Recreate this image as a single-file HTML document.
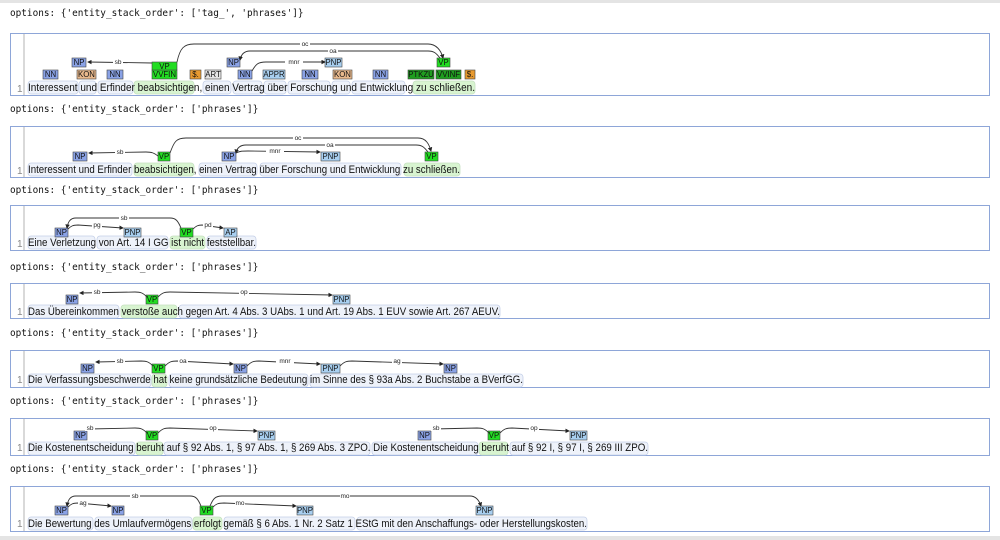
<!DOCTYPE html>
<html><head><meta charset="utf-8"><style>
html,body{margin:0;padding:0;background:#fff;width:1000px;height:540px;overflow:hidden}
svg{display:block}
.h{font-family:"DejaVu Sans Mono","Liberation Mono",monospace;font-size:9.4px;fill:#111}
.t{font-family:"Liberation Sans",Arial,sans-serif;font-size:11px;fill:#111}
.l{font-family:"Liberation Sans",Arial,sans-serif;font-size:7.8px;fill:#111;text-anchor:middle}
.a{font-family:"Liberation Sans",Arial,sans-serif;font-size:6.5px;fill:#222;text-anchor:middle}
.arc{fill:none;stroke:#333;stroke-width:0.9}
.pan{fill:#fff;stroke:#8ea6d8;stroke-width:1}
.wb{fill:#eef2fa;stroke:#c5d0e8;stroke-width:0.8}
.wg{fill:#d8f4d0;stroke:#c5e0c0;stroke-width:0.8}
.n{font-family:"Liberation Sans",Arial,sans-serif;font-size:10px;fill:#888}
</style></head><body>
<svg width="1000" height="540" viewBox="0 0 1000 540">
<defs><marker id="m" markerWidth="5" markerHeight="5" refX="4" refY="2.5" orient="auto"><path d="M0,0 L5,2.5 L0,5z" fill="#222"/></marker></defs>
<rect x="0" y="0" width="1000" height="3" fill="#e4e4e4"/>
<rect x="0" y="536" width="1000" height="4" fill="#e4e4e4"/>

<text class="h" x="10" y="16">options: {'entity_stack_order': ['tag_', 'phrases']}</text>
<text class="h" x="10" y="112">options: {'entity_stack_order': ['phrases']}</text>
<text class="h" x="10" y="193">options: {'entity_stack_order': ['phrases']}</text>
<text class="h" x="10" y="270">options: {'entity_stack_order': ['phrases']}</text>
<text class="h" x="10" y="336">options: {'entity_stack_order': ['phrases']}</text>
<text class="h" x="10" y="404">options: {'entity_stack_order': ['phrases']}</text>
<text class="h" x="10" y="472">options: {'entity_stack_order': ['phrases']}</text>

<g>
<rect class="pan" x="10.5" y="33.5" width="979" height="62"/>
<rect class="pan" x="10.5" y="126.5" width="979" height="51"/>
<rect class="pan" x="10.5" y="205.5" width="979" height="45"/>
<rect class="pan" x="10.5" y="283.5" width="979" height="35"/>
<rect class="pan" x="10.5" y="350.5" width="979" height="37"/>
<rect class="pan" x="10.5" y="418.5" width="979" height="37"/>
<rect class="pan" x="10.5" y="486.5" width="979" height="45"/>
</g>
<g stroke="#ccc" stroke-width="1.5">
<line x1="24" y1="34" x2="24" y2="95"/><line x1="24" y1="127" x2="24" y2="177"/>
<line x1="24" y1="206" x2="24" y2="250"/><line x1="24" y1="284" x2="24" y2="318"/>
<line x1="24" y1="351" x2="24" y2="387"/><line x1="24" y1="419" x2="24" y2="455"/>
<line x1="24" y1="487" x2="24" y2="531"/>
</g>
<text x="17" y="92" class="n">1</text><text x="17" y="174" class="n">1</text><text x="17" y="247" class="n">1</text><text x="17" y="315" class="n">1</text><text x="17" y="383" class="n">1</text><text x="17" y="451" class="n">1</text><text x="17" y="527" class="n">1</text>

<!-- PANEL 1 -->
<g>
<rect class="wb" x="28" y="81" width="50" height="13" rx="3"/><rect class="wb" x="79" y="81" width="17" height="13" rx="3"/><rect class="wb" x="98" y="81" width="35" height="13" rx="3"/>
<rect class="wg" x="134" y="81" width="60" height="13" rx="3"/><rect class="wb" x="203" y="81" width="28" height="13" rx="3"/><rect class="wb" x="233" y="81" width="29" height="13" rx="3"/>
<rect class="wb" x="264" y="81" width="22" height="13" rx="3"/><rect class="wb" x="288" y="81" width="42" height="13" rx="3"/><rect class="wb" x="332" y="81" width="18" height="13" rx="3"/><rect class="wb" x="352" y="81" width="53" height="13" rx="3"/>
<rect class="wg" x="413" y="81" width="62" height="13" rx="3"/>
<text class="t" x="28" y="91" textLength="447" lengthAdjust="spacingAndGlyphs">Interessent und Erfinder beabsichtigen,  einen Vertrag über Forschung und Entwicklung   zu schließen.</text>
<g stroke="#444" stroke-width="0.6">
<rect x="43" y="70" width="15" height="9" fill="#8aa2e6"/><rect x="77" y="70" width="19" height="9" fill="#e8b88c"/><rect x="107" y="70" width="16" height="9" fill="#8aa2e6"/>
<rect x="152" y="70" width="25" height="9" fill="#22dd22"/><rect x="190" y="70" width="11" height="9" fill="#e89a30"/><rect x="205" y="70" width="16" height="9" fill="#e4e4e4"/>
<rect x="238" y="70" width="14" height="9" fill="#8aa2e6"/><rect x="263" y="70" width="22" height="9" fill="#a8cff0"/><rect x="302" y="70" width="16" height="9" fill="#8aa2e6"/>
<rect x="333" y="70" width="19" height="9" fill="#e8b88c"/><rect x="373" y="70" width="15" height="9" fill="#8aa2e6"/>
<rect x="408" y="70" width="26" height="9" fill="#1f9e1f"/><rect x="436" y="70" width="25" height="9" fill="#1f9e1f"/><rect x="465" y="70" width="10" height="9" fill="#e89a30"/>
<rect x="72" y="58" width="14" height="9" fill="#8aa2e6"/><rect x="152" y="62" width="25" height="8" fill="#22dd22"/>
<rect x="227" y="58" width="13" height="9" fill="#8aa2e6"/><rect x="325" y="58" width="17" height="9" fill="#a8cff0"/><rect x="437" y="58" width="13" height="9" fill="#22dd22"/>
</g>
<text class="l" x="50.5" y="77">NN</text><text class="l" x="86.5" y="77">KON</text><text class="l" x="115" y="77">NN</text><text class="l" x="164.5" y="77">VVFIN</text><text class="l" x="195.5" y="77">$.</text><text class="l" x="213" y="77">ART</text><text class="l" x="245" y="77">NN</text><text class="l" x="274" y="77">APPR</text><text class="l" x="310" y="77">NN</text><text class="l" x="342.5" y="77">KON</text><text class="l" x="380.5" y="77">NN</text><text class="l" x="421" y="77">PTKZU</text><text class="l" x="448.5" y="77">VVINF</text><text class="l" x="470" y="77">$.</text>
<text class="l" x="79" y="65">NP</text><text class="l" x="164.5" y="69">VP</text><text class="l" x="233.5" y="65">NP</text><text class="l" x="333.5" y="65">PNP</text><text class="l" x="443.5" y="65">VP</text>
<path class="arc" d="M152,63 L88,62" marker-end="url(#m)"/><rect x="113" y="59" width="10" height="6" fill="#fff"/><text class="a" x="118" y="64">sb</text>
<path class="arc" d="M177,62 C180,48 184,44 194,44 L428,44 C436,44 441,50 443,58" marker-end="url(#m)"/><rect x="300" y="41" width="10" height="6" fill="#fff"/><text class="a" x="305" y="46">oc</text>
<path class="arc" d="M440,58 C436,53 434,51 428,51 L250,51 C244,51 241,55 240,60" marker-end="url(#m)"/><rect x="328" y="48" width="10" height="6" fill="#fff"/><text class="a" x="333" y="53">oa</text>
<path class="arc" d="M252,71 C256,64 258,62 266,62 L325,62" marker-end="url(#m)"/><rect x="285" y="59" width="18" height="6" fill="#fff"/><text class="a" x="294" y="64">mnr</text>
</g>

<!-- PANEL 2 -->
<g>
<rect class="wb" x="28" y="163" width="104" height="13" rx="3"/><rect class="wg" x="134" y="163" width="60" height="13" rx="3"/><rect class="wb" x="199" y="163" width="58" height="13" rx="3"/><rect class="wb" x="260" y="163" width="141" height="13" rx="3"/><rect class="wg" x="404" y="163" width="56" height="13" rx="3"/>
<text class="t" x="28" y="173" textLength="432" lengthAdjust="spacingAndGlyphs">Interessent und Erfinder beabsichtigen, einen Vertrag über Forschung und Entwicklung zu schließen.</text>
<g stroke="#444" stroke-width="0.6"><rect x="73" y="152" width="14" height="9" fill="#8aa2e6"/><rect x="158" y="152" width="12" height="9" fill="#22dd22"/><rect x="222" y="152" width="14" height="9" fill="#8aa2e6"/><rect x="321" y="152" width="19" height="9" fill="#a8cff0"/><rect x="425" y="152" width="13" height="9" fill="#22dd22"/></g>
<text class="l" x="80" y="159">NP</text><text class="l" x="164" y="159">VP</text><text class="l" x="229" y="159">NP</text><text class="l" x="330.5" y="159">PNP</text><text class="l" x="431.5" y="159">VP</text>
<path class="arc" d="M158,156 C154,153 152,152 146,152 L89,153" marker-end="url(#m)"/><rect x="115" y="149" width="10" height="6" fill="#fff"/><text class="a" x="120" y="154">sb</text>
<path class="arc" d="M170,153 C174,142 176,138 186,138 L418,138 C426,138 429,144 431,151" marker-end="url(#m)"/><rect x="293" y="135" width="10" height="6" fill="#fff"/><text class="a" x="298" y="140">oc</text>
<path class="arc" d="M428,152 C424,147 422,145 416,145 L246,145 C240,145 237,148 236,153" marker-end="url(#m)"/><rect x="325" y="142" width="10" height="6" fill="#fff"/><text class="a" x="330" y="147">oa</text>
<path class="arc" d="M236,153 C240,151 242,151 248,151 L320,152" marker-end="url(#m)"/><rect x="266" y="148" width="18" height="6" fill="#fff"/><text class="a" x="275" y="153">mnr</text>
</g>

<!-- PANEL 3 -->
<g>
<rect class="wb" x="28" y="236" width="67" height="13" rx="3"/><rect class="wb" x="97" y="236" width="71" height="13" rx="3"/><rect class="wg" x="170" y="236" width="35" height="13" rx="3"/><rect class="wb" x="207" y="236" width="49" height="13" rx="3"/>
<text class="t" x="28" y="246" textLength="228" lengthAdjust="spacingAndGlyphs">Eine Verletzung von Art. 14 I GG ist nicht feststellbar.</text>
<g stroke="#444" stroke-width="0.6"><rect x="55" y="228" width="13" height="9" fill="#8aa2e6"/><rect x="124" y="228" width="17" height="9" fill="#a8cff0"/><rect x="180" y="228" width="13" height="9" fill="#22dd22"/><rect x="224" y="228" width="13" height="9" fill="#a8cff0"/></g>
<text class="l" x="61.5" y="235">NP</text><text class="l" x="132.5" y="235">PNP</text><text class="l" x="186.5" y="235">VP</text><text class="l" x="230.5" y="235">AP</text>
<path class="arc" d="M181,228 C178,221 176,218 170,218 L76,218 C70,218 68,222 67,228" marker-end="url(#m)"/><rect x="119" y="215" width="10" height="6" fill="#fff"/><text class="a" x="124" y="220">sb</text>
<path class="arc" d="M68,229 C71,226 73,225 78,225 L123,228" marker-end="url(#m)"/><rect x="92" y="222" width="10" height="6" fill="#fff"/><text class="a" x="97" y="227">pg</text>
<path class="arc" d="M193,229 C196,226 198,225 202,225 L223,228" marker-end="url(#m)"/><rect x="203" y="222" width="10" height="6" fill="#fff"/><text class="a" x="208" y="227">pd</text>
</g>

<!-- PANEL 4 -->
<g>
<rect class="wb" x="28" y="305" width="91" height="13" rx="3"/><rect class="wg" x="121" y="305" width="56" height="13" rx="3"/><rect class="wb" x="179" y="305" width="321" height="13" rx="3"/>
<text class="t" x="28" y="315" textLength="472" lengthAdjust="spacingAndGlyphs">Das Übereinkommen verstoße auch gegen Art. 4 Abs. 3 UAbs. 1 und Art. 19 Abs. 1 EUV sowie Art. 267 AEUV.</text>
<g stroke="#444" stroke-width="0.6"><rect x="66" y="295" width="12" height="9" fill="#8aa2e6"/><rect x="146" y="295" width="12" height="9" fill="#22dd22"/><rect x="333" y="295" width="17" height="9" fill="#a8cff0"/></g>
<text class="l" x="72" y="302">NP</text><text class="l" x="152" y="302">VP</text><text class="l" x="341.5" y="302">PNP</text>
<path class="arc" d="M147,297 C143,293 141,292 135,292 L80,293" marker-end="url(#m)"/><rect x="92" y="289" width="10" height="6" fill="#fff"/><text class="a" x="97" y="294">sb</text>
<path class="arc" d="M158,297 C162,293 164,292 170,292 L332,295" marker-end="url(#m)"/><rect x="239" y="289" width="10" height="6" fill="#fff"/><text class="a" x="244" y="294">op</text>
</g>

<!-- PANEL 5 -->
<g>
<rect class="wb" x="28" y="374" width="123" height="13" rx="3"/><rect class="wg" x="152" y="374" width="15" height="13" rx="3"/><rect class="wb" x="169" y="374" width="139" height="13" rx="3"/><rect class="wb" x="310" y="374" width="213" height="13" rx="3"/>
<text class="t" x="28" y="383" textLength="495" lengthAdjust="spacingAndGlyphs">Die Verfassungsbeschwerde hat keine grundsätzliche Bedeutung im Sinne des § 93a Abs. 2 Buchstabe a BVerfGG.</text>
<g stroke="#444" stroke-width="0.6"><rect x="81" y="364" width="13" height="9" fill="#8aa2e6"/><rect x="152" y="364" width="13" height="9" fill="#22dd22"/><rect x="234" y="364" width="13" height="9" fill="#8aa2e6"/><rect x="321" y="364" width="19" height="9" fill="#a8cff0"/><rect x="444" y="364" width="13" height="9" fill="#8aa2e6"/></g>
<text class="l" x="87.5" y="371">NP</text><text class="l" x="158.5" y="371">VP</text><text class="l" x="240.5" y="371">NP</text><text class="l" x="330.5" y="371">PNP</text><text class="l" x="450.5" y="371">NP</text>
<path class="arc" d="M153,366 C149,362 147,361 141,361 L96,362" marker-end="url(#m)"/><rect x="115" y="358" width="10" height="6" fill="#fff"/><text class="a" x="120" y="363">sb</text>
<path class="arc" d="M165,366 C169,362 171,361 177,361 L233,364" marker-end="url(#m)"/><rect x="178" y="358" width="10" height="6" fill="#fff"/><text class="a" x="183" y="363">oa</text>
<path class="arc" d="M247,366 C251,362 253,361 259,361 L320,364" marker-end="url(#m)"/><rect x="276" y="358" width="18" height="6" fill="#fff"/><text class="a" x="285" y="363">mnr</text>
<path class="arc" d="M340,366 C344,362 346,361 352,361 L443,364" marker-end="url(#m)"/><rect x="392" y="358" width="10" height="6" fill="#fff"/><text class="a" x="397" y="363">ag</text>
</g>

<!-- PANEL 6 -->
<g>
<rect class="wb" x="28" y="442" width="107" height="13" rx="3"/><rect class="wg" x="136" y="442" width="27" height="13" rx="3"/><rect class="wb" x="164" y="442" width="206" height="13" rx="3"/>
<rect class="wb" x="372" y="442" width="106" height="13" rx="3"/><rect class="wg" x="479" y="442" width="29" height="13" rx="3"/><rect class="wb" x="510" y="442" width="138" height="13" rx="3"/>
<text class="t" x="28" y="451" textLength="620" lengthAdjust="spacingAndGlyphs">Die Kostenentscheidung beruht auf § 92 Abs. 1, § 97 Abs. 1, § 269 Abs. 3 ZPO. Die Kostenentscheidung beruht auf § 92 I, § 97 I, § 269 III ZPO.</text>
<g stroke="#444" stroke-width="0.6"><rect x="74" y="431" width="13" height="9" fill="#8aa2e6"/><rect x="146" y="431" width="12" height="9" fill="#22dd22"/><rect x="258" y="431" width="17" height="9" fill="#a8cff0"/><rect x="418" y="431" width="13" height="9" fill="#8aa2e6"/><rect x="488" y="431" width="12" height="9" fill="#22dd22"/><rect x="570" y="431" width="17" height="9" fill="#a8cff0"/></g>
<text class="l" x="80.5" y="438">NP</text><text class="l" x="152" y="438">VP</text><text class="l" x="266.5" y="438">PNP</text><text class="l" x="424.5" y="438">NP</text><text class="l" x="494" y="438">VP</text><text class="l" x="578.5" y="438">PNP</text>
<path class="arc" d="M147,433 C143,429 141,428 135,428 L89,429" marker-end="url(#m)"/><rect x="85" y="425" width="10" height="6" fill="#fff"/><text class="a" x="90" y="430">sb</text>
<path class="arc" d="M158,433 C162,429 164,428 170,428 L257,431" marker-end="url(#m)"/><rect x="208" y="425" width="10" height="6" fill="#fff"/><text class="a" x="213" y="430">op</text>
<path class="arc" d="M489,433 C485,429 483,428 477,428 L433,429" marker-end="url(#m)"/><rect x="431" y="425" width="10" height="6" fill="#fff"/><text class="a" x="436" y="430">sb</text>
<path class="arc" d="M500,433 C504,429 506,428 512,428 L569,431" marker-end="url(#m)"/><rect x="529" y="425" width="10" height="6" fill="#fff"/><text class="a" x="534" y="430">op</text>
</g>

<!-- PANEL 7 -->
<g>
<rect class="wb" x="28" y="517" width="65" height="13" rx="3"/><rect class="wb" x="95" y="517" width="97" height="13" rx="3"/><rect class="wg" x="193" y="517" width="29" height="13" rx="3"/><rect class="wb" x="224" y="517" width="131" height="13" rx="3"/><rect class="wb" x="357" y="517" width="230" height="13" rx="3"/>
<text class="t" x="28" y="527" textLength="559" lengthAdjust="spacingAndGlyphs">Die Bewertung des Umlaufvermögens erfolgt gemäß § 6 Abs. 1 Nr. 2 Satz 1 EStG mit den Anschaffungs- oder Herstellungskosten.</text>
<g stroke="#444" stroke-width="0.6"><rect x="55" y="506" width="13" height="9" fill="#8aa2e6"/><rect x="112" y="506" width="12" height="9" fill="#8aa2e6"/><rect x="200" y="506" width="13" height="9" fill="#22dd22"/><rect x="297" y="506" width="16" height="9" fill="#a8cff0"/><rect x="476" y="506" width="17" height="9" fill="#a8cff0"/></g>
<text class="l" x="61.5" y="513">NP</text><text class="l" x="118" y="513">NP</text><text class="l" x="206.5" y="513">VP</text><text class="l" x="305" y="513">PNP</text><text class="l" x="484.5" y="513">PNP</text>
<path class="arc" d="M201,506 C198,499 196,496 190,496 L76,496 C70,496 68,500 67,506" marker-end="url(#m)"/><rect x="130" y="493" width="10" height="6" fill="#fff"/><text class="a" x="135" y="498">sb</text>
<path class="arc" d="M68,507 C71,504 73,503 78,503 L111,506" marker-end="url(#m)"/><rect x="78" y="500" width="10" height="6" fill="#fff"/><text class="a" x="83" y="505">ag</text>
<path class="arc" d="M213,507 C216,504 218,503 224,503 L296,506" marker-end="url(#m)"/><rect x="235" y="500" width="10" height="6" fill="#fff"/><text class="a" x="240" y="505">mo</text>
<path class="arc" d="M210,506 C213,499 215,496 222,496 L470,496 C476,496 479,500 481,506" marker-end="url(#m)"/><rect x="340" y="493" width="10" height="6" fill="#fff"/><text class="a" x="345" y="498">mo</text>
</g>
</svg>
</body></html>
